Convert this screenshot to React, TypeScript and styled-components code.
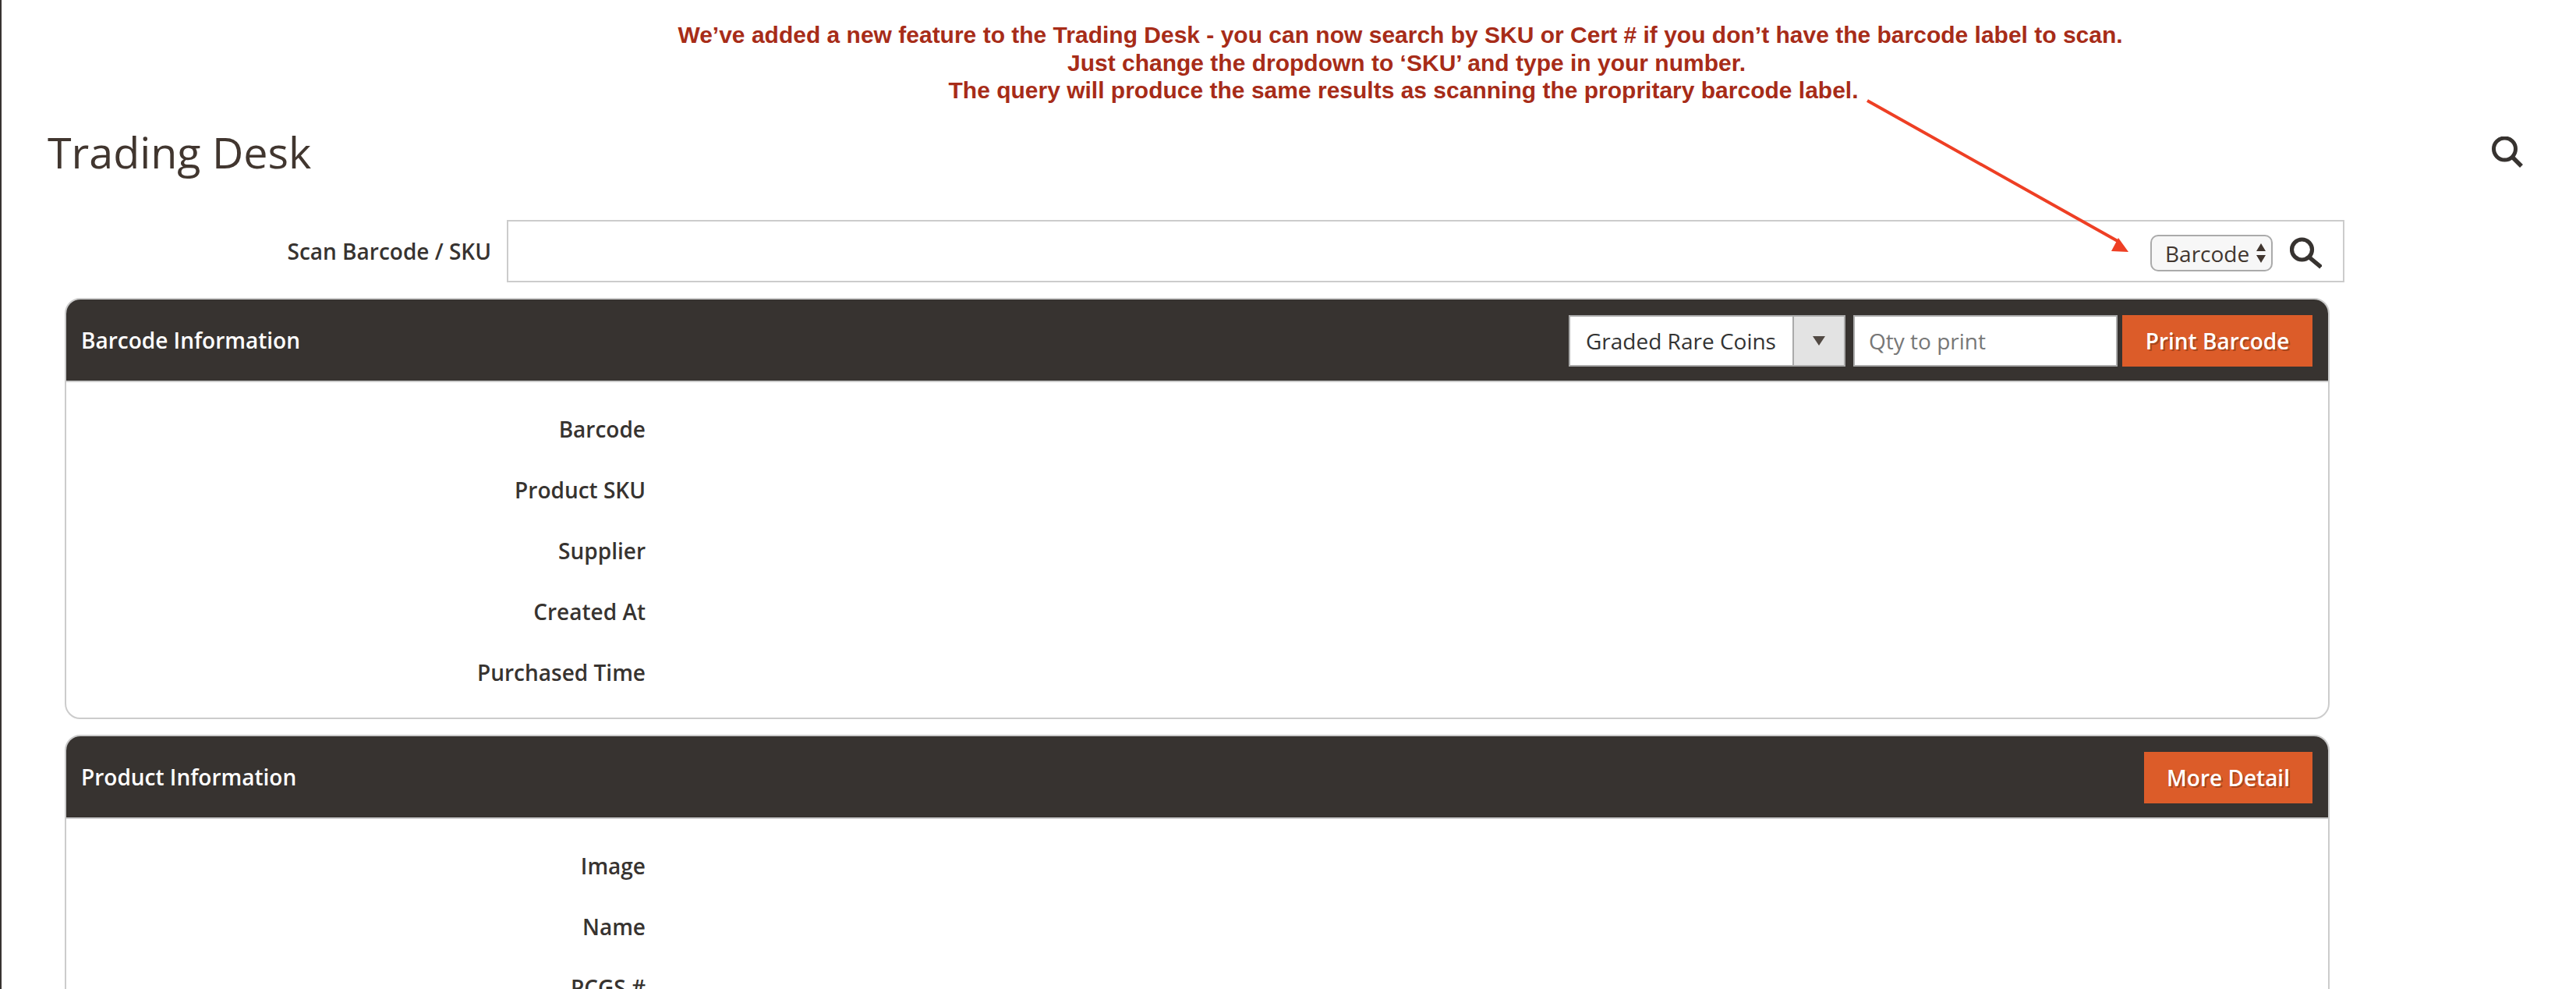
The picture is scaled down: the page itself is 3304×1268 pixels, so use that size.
import React from "react";
import styled, { createGlobalStyle } from "styled-components";

const GlobalStyle = createGlobalStyle`
  html, body {
    margin: 0;
    padding: 0;
    background: #fff;
  }
  * {
    box-sizing: border-box;
  }
`;

const Page = styled.div`
  position: relative;
  width: 3304px;
  height: 1268px;
  overflow: hidden;
  border-left: 2px solid #373330;
  background: #fff;
  font-family: "Open Sans", "Liberation Sans", sans-serif;
  color: #373330;
`;

const Notice = styled.div`
  width: 2400px;
  height: 134px;
  margin-left: 594px;
  padding-top: 27px;
  text-align: center;
  font-family: "Liberation Sans", Arial, sans-serif;
  font-size: 30px;
  font-weight: 700;
  line-height: 35.5px;
  color: #a72c18;
`;

const NoticeLine = styled.div<{ $nudge?: number }>`
  padding-left: ${(p) => p.$nudge ?? 0}px;
`;

const TitleRow = styled.div`
  height: 124px;
  display: flex;
  align-items: center;
  justify-content: space-between;
  padding: 0 68px 3px 59px;
`;

const PageTitle = styled.h1`
  margin: 0;
  font-size: 55.6px;
  font-weight: 400;
  line-height: 1;
  color: #41362f;
`;

const SearchRow = styled.div`
  display: flex;
  align-items: center;
  margin-top: 24px;
`;

const SearchLabel = styled.label`
  width: 648px;
  padding-right: 20px;
  text-align: right;
  font-size: 28px;
  font-weight: 600;
`;

const SearchBox = styled.div`
  width: 2357px;
  height: 80px;
  display: flex;
  align-items: center;
  justify-content: flex-end;
  gap: 22px;
  padding: 5px 27px 0 0;
  border: 2px solid #ccc;
`;

const TypeSelect = styled.div`
  width: 157px;
  height: 47px;
  display: flex;
  align-items: center;
  justify-content: space-between;
  padding: 0 7px 0 17px;
  border: 2px solid #aaa;
  border-radius: 10px;
  background: #f7f7f7;
  font-size: 28px;
  line-height: 1;
  color: #41362f;
`;

const Steppers = styled.span`
  display: flex;
  flex-direction: column;
  gap: 5px;
`;

const Stepper = styled.span<{ $down?: boolean }>`
  width: 0;
  height: 0;
  border-left: 6px solid transparent;
  border-right: 6px solid transparent;
  ${(p) =>
    p.$down
      ? "border-top: 10px solid #41362f;"
      : "border-bottom: 10px solid #41362f;"}
`;

const Panel = styled.section`
  width: 2905px;
  margin: 20px 0 0 81px;
  border: 2px solid #ccc;
  border-radius: 20px;
  overflow: hidden;
`;

const PanelHeader = styled.header`
  height: 106px;
  display: flex;
  align-items: center;
  justify-content: space-between;
  padding: 20px 20px 18px 19px;
  background: #373330;
  border-bottom: 2px solid #ccc;
`;

const PanelTitle = styled.h2`
  margin: 0 0 2px;
  font-size: 28px;
  font-weight: 600;
  line-height: 1;
  color: #fff;
`;

const HeaderControls = styled.div`
  display: flex;
  align-items: center;
`;

const CategorySelect = styled.div`
  width: 355px;
  height: 66px;
  display: flex;
  border: 2px solid #aaa;
  background: #fff;
  font-size: 28px;
  color: #333;
`;

const CategoryValue = styled.span`
  flex: 1;
  display: flex;
  align-items: center;
  padding-left: 20px;
`;

const CategoryToggle = styled.span`
  width: 66px;
  display: flex;
  align-items: center;
  justify-content: center;
  border-left: 2px solid #aaa;
  background: #e3e3e3;

  &::after {
    content: "";
    width: 0;
    height: 0;
    border-left: 8px solid transparent;
    border-right: 8px solid transparent;
    border-top: 12px solid #514943;
  }
`;

const QtyInput = styled.input`
  width: 339px;
  height: 66px;
  margin: 0 6px 0 10px;
  padding: 0 18px;
  border: 2px solid #aaa;
  border-radius: 0;
  outline: none;
  background: #fff;
  font-family: inherit;
  font-size: 28px;
  color: #333;

  &::placeholder {
    color: #777;
    opacity: 1;
  }
`;

const ActionButton = styled.button<{ $width: number }>`
  width: ${(p) => p.$width}px;
  height: 66px;
  padding: 0;
  border: 0;
  border-radius: 0;
  background: #dc5c29;
  font-family: inherit;
  font-size: 28px;
  font-weight: 600;
  color: #fff;
  text-shadow: 2px 2px 0 #a8451c;
`;

const PanelBody = styled.div`
  padding: 21px 0 19px;
`;

const InfoRow = styled.div`
  height: 78px;
  display: flex;
  align-items: center;
`;

const InfoLabel = styled.span`
  width: 743px;
  text-align: right;
  font-size: 28px;
  font-weight: 600;
`;

const ArrowOverlay = styled.svg`
  position: absolute;
  left: -2px;
  top: 0;
  pointer-events: none;
`;

// the header icon is a bit thinner than the one in the search box
const HeaderSearchIcon: React.FC = () => (
  <svg width="40" height="40" viewBox="0 0 40 40" fill="none">
    <circle cx="16.5" cy="16" r="14" stroke="#373330" strokeWidth="5" />
    <path d="M26 26 L38 38" stroke="#373330" strokeWidth="5.5" />
  </svg>
);

const BoxSearchIcon: React.FC = () => (
  <svg width="41" height="41" viewBox="0 0 41 41" fill="none">
    <circle cx="15.5" cy="16" r="13" stroke="#373330" strokeWidth="5.2" />
    <path d="M25 26 L40 38.5" stroke="#373330" strokeWidth="5.5" />
  </svg>
);

const barcodeRows = ["Barcode", "Product SKU", "Supplier", "Created At", "Purchased Time"];
const productRows = ["Image", "Name", "PCGS #"];

const App: React.FC = () => {
  return (
    <Page>
      <GlobalStyle />
      <Notice>
        <NoticeLine>We’ve added a new feature to the Trading Desk - you can now search by SKU or Cert # if you don’t have the barcode label to scan.</NoticeLine>
        <NoticeLine $nudge={16}>Just change the dropdown to ‘SKU’ and type in your number.</NoticeLine>
        <NoticeLine $nudge={8}>The query will produce the same results as scanning the propritary barcode label.</NoticeLine>
      </Notice>
      <TitleRow>
        <PageTitle>Trading Desk</PageTitle>
        <HeaderSearchIcon />
      </TitleRow>
      <SearchRow>
        <SearchLabel>Scan Barcode / SKU</SearchLabel>
        <SearchBox>
          <TypeSelect>
            Barcode
            <Steppers>
              <Stepper />
              <Stepper $down />
            </Steppers>
          </TypeSelect>
          <BoxSearchIcon />
        </SearchBox>
      </SearchRow>
      <Panel>
        <PanelHeader>
          <PanelTitle>Barcode Information</PanelTitle>
          <HeaderControls>
            <CategorySelect>
              <CategoryValue>Graded Rare Coins</CategoryValue>
              <CategoryToggle />
            </CategorySelect>
            <QtyInput placeholder="Qty to print" />
            <ActionButton $width={244}>Print Barcode</ActionButton>
          </HeaderControls>
        </PanelHeader>
        <PanelBody>
          {barcodeRows.map((label) => (
            <InfoRow key={label}>
              <InfoLabel>{label}</InfoLabel>
            </InfoRow>
          ))}
        </PanelBody>
      </Panel>
      <Panel>
        <PanelHeader>
          <PanelTitle>Product Information</PanelTitle>
          <ActionButton $width={216}>More Detail</ActionButton>
        </PanelHeader>
        <PanelBody>
          {productRows.map((label) => (
            <InfoRow key={label}>
              <InfoLabel>{label}</InfoLabel>
            </InfoRow>
          ))}
        </PanelBody>
      </Panel>
      <ArrowOverlay width="3304" height="340" viewBox="0 0 3304 340">
        <path d="M2395 129 L2716 309" stroke="#ee3f24" strokeWidth="4" fill="none" />
        <path d="M2730 323 L2717 305 L2708 322 Z" fill="#ee3f24" />
      </ArrowOverlay>
    </Page>
  );
};

export default App;
